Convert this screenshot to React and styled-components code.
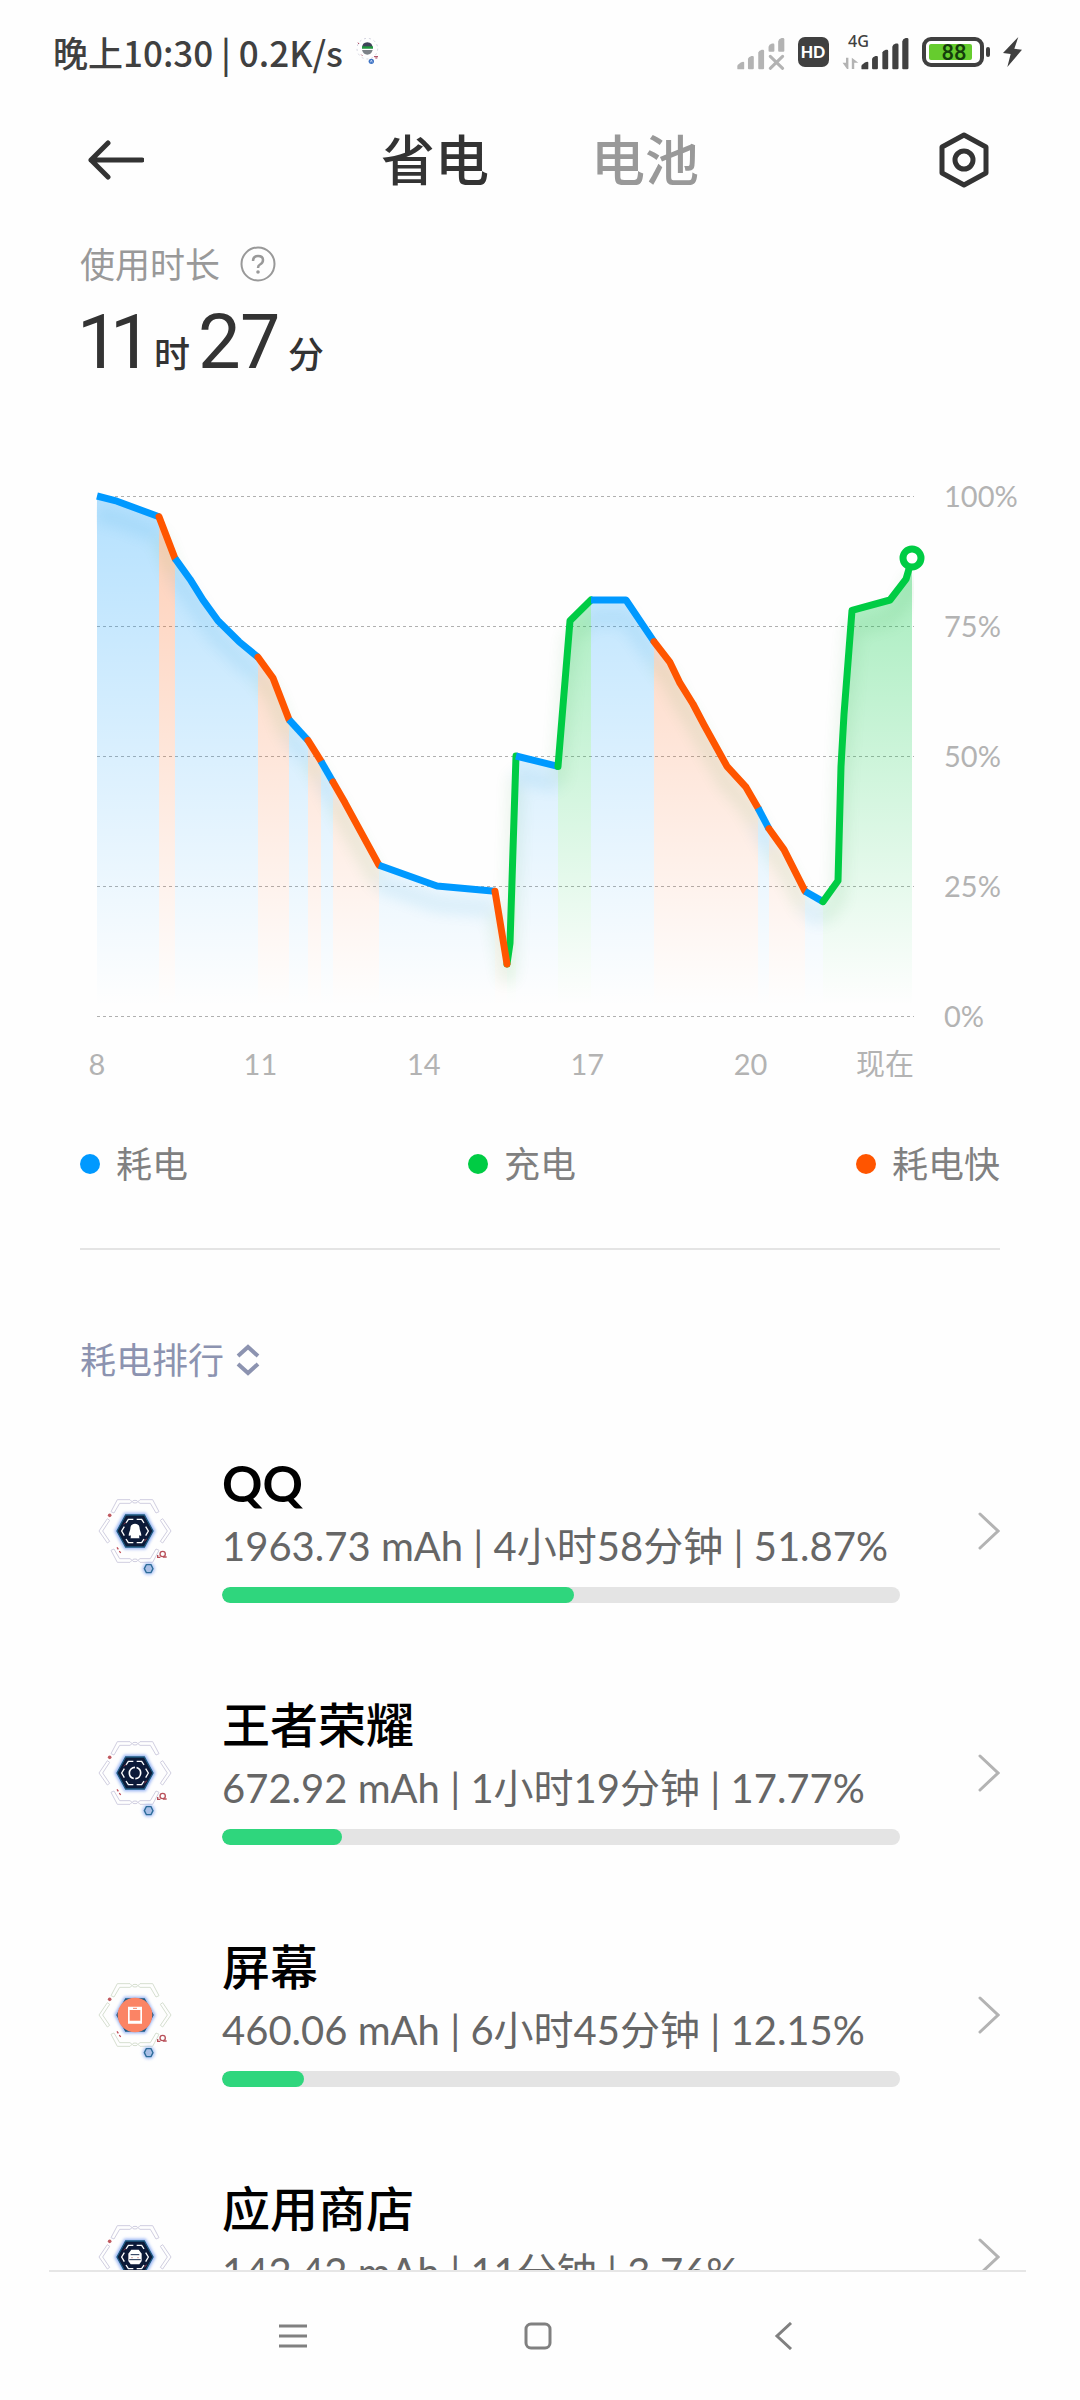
import React, { useState } from 'react';
import styled, { createGlobalStyle } from 'styled-components';

const GlobalStyle = createGlobalStyle`
  * {
    box-sizing: border-box;
  }

  body {
    margin: 0;
    background: #fefefe;
    color: #333;
    font-family: Lato, "Noto Sans CJK SC", sans-serif;
  }

  button {
    border: 0;
    padding: 0;
    background: none;
    color: inherit;
    font: inherit;
    cursor: pointer;
  }

  svg {
    display: block;
    flex-shrink: 0;
  }
`;

const Screen = styled.div`
  height: 100vh;
  display: flex;
  flex-direction: column;
  overflow: hidden;
`;

const StatusBar = styled.div`
  display: flex;
  align-items: center;
  justify-content: space-between;
  height: 104px;
  padding: 0 58px 0 53px;
  color: #404040;
`;

const StatusGroup = styled.div`
  display: flex;
  align-items: center;
  gap: 13px;

  svg {
    overflow: visible;
  }
`;

const StatusText = styled.span`
  font-family: "Noto Sans CJK SC", sans-serif;
  font-size: 35px;
  font-weight: 500;
  line-height: 48px;
`;

const Header = styled.header`
  display: grid;
  grid-template-columns: 1fr auto 1fr;
  align-items: center;
  height: 112px;
  padding: 0 88px;
`;

const IconButton = styled.button`
  justify-self: ${({ $end }) => ($end ? 'end' : 'start')};
`;

const Tabs = styled.nav`
  display: flex;
  gap: 102px;
`;

const Tab = styled.button`
  padding-top: 2px;
  font-size: 54px;
  font-weight: 500;
  line-height: 76px;
  color: ${({ $active }) => ($active ? '#333' : '#999')};
`;

const Content = styled.main`
  flex: 1;
  min-height: 0;
  overflow-y: auto;
  scrollbar-width: none;
  padding: 0 80px;
`;

const Label = styled.div`
  display: flex;
  align-items: center;
  gap: 20px;
  padding-top: 24px;
  font-size: 35px;
  line-height: 48px;
  color: #999;
`;

const Duration = styled.div`
  display: flex;
  align-items: baseline;
  gap: 8px;
  font-family: Roboto, "Noto Sans CJK SC", sans-serif;
  font-size: 36px;
  font-weight: 500;
  line-height: 108px;
`;

const Digits = styled.span`
  font-size: 76px;
  font-weight: 400;
  font-variant-numeric: proportional-nums;
`;

const Chart = styled.section`
  display: grid;
  grid-template-columns: 1fr 86px;
  padding: 86px 0 0 17px;
`;

const Plot = styled.svg`
  width: 100%;
  overflow: visible;
`;

const YAxis = styled.div`
  display: flex;
  flex-direction: column;
  justify-content: space-between;
  margin: -20px -24px -20px 0;
  padding-left: 30px;
  font-size: 29px;
  line-height: 40px;
  white-space: nowrap;
  color: #b3b3b3;
`;

const XAxis = styled.div`
  display: grid;
  grid-template-columns: repeat(5, 2fr) 1fr;
  margin: 28px 0 0 -10%;
  font-size: 29px;
  line-height: 40px;
  text-align: center;
  white-space: nowrap;
  color: #b3b3b3;

  span:last-child {
    justify-self: end;
  }
`;

const Legend = styled.div`
  display: flex;
  justify-content: space-between;
  padding: 54px 0 58px;
  border-bottom: 2px solid #e4e4e4;
`;

const LegendItem = styled.span`
  display: flex;
  align-items: center;
  gap: 16px;
  font-size: 36px;
  line-height: 52px;
  color: #808080;

  &::before {
    content: '';
    width: 20px;
    height: 20px;
    border-radius: 50%;
    background: ${({ $color }) => $color};
  }
`;

const SortButton = styled.button`
  display: flex;
  align-items: center;
  gap: 12px;
  margin: 84px 0 24px;
  font-size: 36px;
  line-height: 52px;
  color: #8c93b0;
`;

const AppList = styled.ul`
  list-style: none;
  margin: 0;
  padding: 0;
`;

const AppRow = styled.li`
  display: grid;
  grid-template-columns: 110px 1fr 68px;
  column-gap: 32px;
  align-items: center;
  height: 242px;
`;

const IconSlot = styled.div`
  display: flex;
  justify-content: center;
`;

const AppName = styled.h2`
  margin: 0;
  font-size: 48px;
  font-weight: 500;
  line-height: 48px;
  color: #000;
`;

const LatinName = styled(AppName)`
  font-size: 50px;
  font-weight: 700;
`;

const Usage = styled.p`
  margin: 14px 0 16px;
  font-size: 40px;
  line-height: 50px;
  white-space: nowrap;
  color: #666;
`;

const Track = styled.div`
  height: 16px;
  border-radius: 8px;
  background: #e4e4e4;
  overflow: hidden;
`;

const Fill = styled.div`
  height: 100%;
  border-radius: 8px;
  background: #2fd67d;
`;

const ChevronSlot = styled.div`
  display: flex;
  justify-content: flex-end;
`;

const NavBar = styled.nav`
  display: flex;
  align-items: center;
  justify-content: center;
  gap: 217px;
  height: 130px;
  margin: 0 54px 0 49px;
  border-top: 2px solid #e6e6e6;
`;

const COLORS = { use: '#0099ff', charge: '#00cc44', fast: '#ff5500' };

// [x, battery %] on an 817 x 520 plot
const SEGMENTS = [
  ['use', [[0, 100], [20, 99], [62, 96]]],
  ['fast', [[62, 96], [78, 88]]],
  ['use', [[78, 88], [93, 84], [106, 80], [121, 76], [142, 72], [161, 69]]],
  ['fast', [[161, 69], [176, 65], [184, 61], [192, 57]]],
  ['use', [[192, 57], [211, 53]]],
  ['fast', [[211, 53], [224, 49]]],
  ['use', [[224, 49], [236, 45]]],
  ['fast', [[236, 45], [248, 41], [282, 29]]],
  ['use', [[282, 29], [340, 25], [398, 24]]],
  ['charge', [[410, 10], [413, 14], [419, 50]]],
  ['fast', [[398, 24], [410, 10]]],
  ['use', [[419, 50], [461, 48]]],
  ['charge', [[461, 48], [473, 76], [494, 80]]],
  ['use', [[494, 80], [529, 80], [557, 72]]],
  ['fast', [[557, 72], [573, 68], [583, 64], [596, 60], [607, 56], [630, 48], [649, 44], [661, 40]]],
  ['use', [[661, 40], [672, 36]]],
  ['fast', [[672, 36], [687, 32], [708, 24]]],
  ['use', [[708, 24], [726, 22]]],
  ['charge', [[726, 22], [741, 26], [744, 48], [747, 58], [755, 78], [793, 80], [809, 84], [815, 88]]],
];

const LINES = [0, 25, 50, 75, 100];

const toY = (percent) => (100 - percent) * 5.2;
const toPoints = (points) => points.map(([x, p]) => `${x},${toY(p)}`).join(' ');

const APPS = [
  { name: 'QQ', icon: 'qq', power: '1963.73 mAh', time: '4小时58分钟', percent: 51.87 },
  { name: '王者荣耀', icon: 'game', power: '672.92 mAh', time: '1小时19分钟', percent: 17.77 },
  { name: '屏幕', icon: 'screen', power: '460.06 mAh', time: '6小时45分钟', percent: 12.15 },
  { name: '应用商店', icon: 'store', power: '142.42 mAh', time: '11分钟', percent: 3.76 },
];

const BatteryChart = () => (
  <Plot viewBox="0 0 817 520" role="img" aria-label="电量曲线">
    <defs>
      {Object.entries(COLORS).map(([kind, color]) => (
        <linearGradient key={kind} id={`area-${kind}`} gradientUnits="userSpaceOnUse" x1="0" y1="0" x2="0" y2="510">
          <stop offset="0" stopColor={color} stopOpacity={kind === 'charge' ? 0.4 : 0.29} />
          <stop offset="1" stopColor={color} stopOpacity="0" />
        </linearGradient>
      ))}
      <filter id="line-shadow" x="-10%" y="-10%" width="120%" height="130%">
        <feGaussianBlur stdDeviation="7" />
      </filter>
      <clipPath id="plot-clip">
        <rect x="-1" y="-6" width="818" height="530" />
      </clipPath>
    </defs>
    {LINES.map((p) => (
      <line key={p} x1="0" x2="817" y1={toY(p)} y2={toY(p)} stroke="#b0b0b0" strokeDasharray="3 3" shapeRendering="crispEdges" />
    ))}
    {SEGMENTS.map(([kind, points]) => (
      <polygon
        key={points[0].join()}
        points={`${points[0][0]},520 ${toPoints(points)} ${points[points.length - 1][0]},520`}
        fill={`url(#area-${kind})`}
      />
    ))}
    <g clipPath="url(#plot-clip)">
      <g filter="url(#line-shadow)" opacity="0.09" transform="translate(0 18)">
        {SEGMENTS.map(([kind, points]) => (
          <polyline
            key={points[0].join()}
            points={toPoints(points)}
            fill="none"
            stroke={kind === 'use' ? '#0088cc' : '#2f9a3c'}
            strokeWidth="16"
          />
        ))}
      </g>
      {SEGMENTS.map(([kind, points]) => (
        <polyline
          key={points[0].join()}
          points={toPoints(points)}
          fill="none"
          stroke={COLORS[kind]}
          strokeWidth="7"
          strokeLinecap={kind === 'use' ? 'butt' : 'round'}
          strokeLinejoin="round"
        />
      ))}
    </g>
    <circle cx="815" cy="62" r="9" fill="#fff" stroke={COLORS.charge} strokeWidth="7" />
  </Plot>
);

const HexFrame = ({ color }) => {
  const corner = 'M-72-58L-53-94H-15L-9-88L-15-83H-46L-63-54Z';
  return (
    <g fill="none" stroke={color} strokeWidth="3">
      <path d={corner} />
      <path d={corner} transform="scale(-1 1)" />
      <path d={corner} transform="scale(1 -1)" />
      <path d={corner} transform="scale(-1 -1)" />
      <path d="M-108 0L-83-37L-76-32L-97 0L-76 31L-83 36Z" />
      <path d="M108 0L83-37L76-32L97 0L76 31L83 36Z" />
      <ellipse cy="-88" rx="8" ry="4" />
      <ellipse cy="88" rx="8" ry="4" />
    </g>
  );
};

const Glyph = ({ name }) => {
  if (name === 'qq') {
    return (
      <path
        d="M0-22C-10-22-14-15-14-7C-14-2-19 5-19 13C-18 17-15 13-14 12C-12 17-12 19-14 22H14C12 19 12 17 14 12C15 13 18 17 19 13C19 5 14-2 14-7C14-15 10-22 0-22Z"
        fill="#fff"
      />
    );
  }
  if (name === 'game') {
    return <circle r="17" fill="none" stroke="#fff" strokeWidth="5" strokeDasharray="48 5" strokeDashoffset="-30" />;
  }
  return (
    <g>
      <path d="M-11-22H11L20-10V12L13 22H-13L-20 12V-10Z" fill="#fff" />
      <path d="M-13-7H13M-17 8H17" stroke="#1a2c50" strokeWidth="3" />
      <path d="M-12 2H-6M6 2H12" stroke="#c88" strokeWidth="2" />
    </g>
  );
};

const AppIcon = ({ name }) => (
  <svg width="76" height="100" viewBox="-114 -150 228 300" aria-hidden="true">
    <defs>
      <filter id="glow" x="-40%" y="-40%" width="180%" height="180%">
        <feGaussianBlur stdDeviation="5" />
      </filter>
    </defs>
    <HexFrame color={name === 'screen' ? '#d6dfd0' : '#d0cee0'} />
    <path d="M-62 0L-32-55H32L62 0L32 55H-32Z" fill="#7da0f0" opacity="0.8" filter="url(#glow)" />
    <path d="M-54 0L-28-48H28L54 0L28 48H-28Z" fill={name === 'screen' ? '#2a6a94' : '#0c1a38'} stroke="#1c587f" strokeWidth="4" />
    {name === 'screen' ? (
      <g>
        <circle r="52" fill="#fb8465" />
        <path d="M-21-25H21V26H-21ZM-16-15V17H16V-15Z" fill="#fff" fillRule="evenodd" />
        <path d="M-6-20H6" stroke="#fb8465" strokeWidth="3" />
      </g>
    ) : (
      <g>
        <path
          d="M-32-13L-40 0L-32 14M32-13L40 0L32 14M-27-24L-20-35H-5M5-35H20L27-24M-27 24L-20 35H-5M5 35H20L27 24"
          fill="none"
          stroke="#fff"
          strokeWidth="4"
        />
        <path d="M-33-20L-28-25M28 30L35 24" stroke="#a33a4a" strokeWidth="3" />
        <Glyph name={name} />
      </g>
    )}
    <circle cx="-76" cy="-47" r="5.5" fill="#c05a60" />
    <path d="M-54 49L-50 55M-47 60L-43 66" stroke="#c04a55" strokeWidth="4" />
    <g fill="none" stroke="#b8505a" strokeWidth="4">
      <circle cx="83" cy="69" r="8" />
      <path d="M66 79H76M84 78H95M68 72V78" />
    </g>
    <circle cx="41" cy="113" r="19" fill="#9db8f4" opacity="0.8" filter="url(#glow)" />
    <path d="M28 113L34 101H48L54 113L48 125H34Z" fill="#a9bfe6" stroke="#2c6c99" strokeWidth="4" />
  </svg>
);

const SignalBars = () => (
  <>
    <path d="M0 98V92Q0 86 10 80Q19 76 20 80V98Q20 100 17 100H3Q0 100 0 98Z" />
    <path d="M31 97V69Q32 64 41 61H45Q48 61 48 65V97Q48 100 45 100H34Q31 100 31 97Z" />
    <path d="M61 97V51Q62 46 71 43H75Q78 43 78 47V97Q78 100 75 100H64Q61 100 61 97Z" />
  </>
);

const StatusIcons = () => (
  <StatusGroup>
    <svg width="48" height="35" viewBox="0 0 138 102" fill="#b3b3b3">
      <SignalBars />
      <path d="M91 46V34Q92 28 101 25H105Q108 25 108 29V46Q108 49 105 49H94Q91 49 91 46Z" />
      <path d="M119 46V19Q120 12 129 9H133Q137 9 137 13V46Q137 49 134 49H122Q119 49 119 46Z" />
      <path d="M96 62L132 97M132 62L96 97" stroke="#b3b3b3" strokeWidth="9" strokeLinecap="round" />
    </svg>
    <svg width="31" height="30" viewBox="0 0 31 30">
      <rect width="31" height="30" rx="7" fill="#404040" />
      <text x="15" y="21" textAnchor="middle" fontFamily="Lato, sans-serif" fontSize="16" fontWeight="900" fill="#fff">HD</text>
    </svg>
    <svg width="67" height="35" viewBox="0 0 192 102" fill="#404040">
      <text x="16" y="34" fontFamily="Noto Sans, sans-serif" fontSize="47" fontWeight="500">4G</text>
      <g fill="#b3b3b3">
        <path d="M10 66H17V99H13L0 81H10ZM27 99V66L46 81H34V99Z" />
      </g>
      <g transform="translate(55 0)">
        <SignalBars />
        <path d="M90 97V34Q91 28 100 25H104Q108 25 108 29V97Q108 100 104 100H93Q90 100 90 97Z" />
        <path d="M119 97V19Q120 12 129 9H133Q137 9 137 13V97Q137 100 133 100H122Q119 100 119 97Z" />
      </g>
    </svg>
    <svg width="68" height="30" viewBox="0 0 68 30">
      <rect x="2" y="2" width="58" height="26" rx="7" fill="#fff" stroke="#404040" strokeWidth="4" />
      <rect x="7" y="7" width="43" height="16" rx="2" fill="#66cc2e" />
      <text x="32" y="23" textAnchor="middle" fontFamily="Roboto, sans-serif" fontSize="22" fontWeight="500" fill="#143d0c">88</text>
      <rect x="64" y="10" width="4" height="10" rx="2" fill="#404040" />
    </svg>
    <svg width="19" height="30" viewBox="0 0 57 90" fill="#404040">
      <path d="M46 0L0 48L23 51L13 90L57 38L34 35Z" />
    </svg>
  </StatusGroup>
);

const StatusBadge = () => (
  <svg width="24" height="28" viewBox="0 0 72 84">
    <circle cx="34" cy="32" r="31" fill="none" stroke="#d5d5e0" strokeWidth="3" strokeDasharray="6 9" />
    <path d="M18 31Q18 13 34 13Q50 13 50 31Z" fill="#3d4258" />
    <rect x="18" y="25" width="33" height="7" fill="#1f9a3d" />
    <path d="M18 36H50Q46 50 34 50Q22 50 18 36Z" fill="#7d8288" />
    <path d="M6 14L9 18M16 50L19 53M54 56H66M58 60H64" stroke="#a33a55" strokeWidth="3" />
    <circle cx="46" cy="70" r="8" fill="#3f74c4" />
    <path d="M43 73L46 66L49 73" fill="none" stroke="#dfe8ff" strokeWidth="2" />
  </svg>
);

const App = () => {
  const [tab, setTab] = useState('省电');

  return (
    <Screen>
      <GlobalStyle />
      <StatusBar>
        <StatusGroup>
          <StatusText>晚上10:30 | 0.2K/s</StatusText>
          <StatusBadge />
        </StatusGroup>
        <StatusIcons />
      </StatusBar>

      <Header>
        <IconButton aria-label="返回">
          <svg width="56" height="40" viewBox="0 0 56 40" fill="none" stroke="#333" strokeWidth="5" strokeLinecap="round" strokeLinejoin="round">
            <path d="M54 20H3M20 3L3 20L20 37" />
          </svg>
        </IconButton>
        <Tabs>
          {['省电', '电池'].map((name) => (
            <Tab key={name} $active={tab === name} onClick={() => setTab(name)}>{name}</Tab>
          ))}
        </Tabs>
        <IconButton $end aria-label="设置">
          <svg width="56" height="56" viewBox="0 0 56 56" fill="none" stroke="#333" strokeWidth="5" strokeLinejoin="round">
            <path d="M28 3L50 15V41L28 53L6 41V15Z" />
            <circle cx="28" cy="28" r="9" />
          </svg>
        </IconButton>
      </Header>

      <Content>
        <Label>
          使用时长
          <svg width="36" height="36" viewBox="0 0 36 36" fill="none" stroke="#999" strokeWidth="2">
            <circle cx="18" cy="18" r="16.5" />
            <path d="M13 15Q13 10 18 10Q23 10 23 14Q23 17 20 18.5Q18 19.5 18 22" strokeWidth="2.5" />
            <circle cx="18" cy="26" r="1.8" fill="#999" stroke="none" />
          </svg>
        </Label>
        <Duration>
          <Digits>11</Digits>时<Digits>27</Digits>分
        </Duration>

        <Chart>
          <BatteryChart />
          <YAxis>
            {[100, 75, 50, 25, 0].map((p) => <span key={p}>{p}%</span>)}
          </YAxis>
          <XAxis>
            {['8', '11', '14', '17', '20', '现在'].map((t) => <span key={t}>{t}</span>)}
          </XAxis>
        </Chart>

        <Legend>
          <LegendItem $color={COLORS.use}>耗电</LegendItem>
          <LegendItem $color={COLORS.charge}>充电</LegendItem>
          <LegendItem $color={COLORS.fast}>耗电快</LegendItem>
        </Legend>

        <SortButton>
          耗电排行
          <svg width="24" height="32" viewBox="0 0 24 32" fill="none" stroke="#8c93b0" strokeWidth="4">
            <path d="M2 12L12 3L22 12M2 20L12 29L22 20" />
          </svg>
        </SortButton>

        <AppList>
          {APPS.map(({ name, icon, power, time, percent }) => {
            const Name = /^\w+$/.test(name) ? LatinName : AppName;
            return (
              <AppRow key={name}>
                <IconSlot><AppIcon name={icon} /></IconSlot>
                <div>
                  <Name>{name}</Name>
                  <Usage>{power} | {time} | {percent}%</Usage>
                  <Track>
                    <Fill style={{ width: `${percent}%` }} />
                  </Track>
                </div>
                <ChevronSlot>
                  <svg width="22" height="38" viewBox="0 0 22 38" fill="none" stroke="#b3b3b3" strokeWidth="3" strokeLinecap="round">
                    <path d="M2 2L20 19L2 36" />
                  </svg>
                </ChevronSlot>
              </AppRow>
            );
          })}
        </AppList>
      </Content>

      <NavBar>
        <IconButton aria-label="最近任务">
          <svg width="28" height="28" viewBox="0 0 28 28" stroke="#808080" strokeWidth="3">
            <path d="M0 4H28M0 14H28M0 24H28" />
          </svg>
        </IconButton>
        <IconButton aria-label="主屏幕">
          <svg width="28" height="28" viewBox="0 0 28 28" fill="none" stroke="#808080" strokeWidth="3">
            <rect x="2" y="2" width="24" height="24" rx="5" />
          </svg>
        </IconButton>
        <IconButton aria-label="后退">
          <svg width="28" height="28" viewBox="0 0 28 28" fill="none" stroke="#808080" strokeWidth="3">
            <path d="M22 1L8 14L22 27" />
          </svg>
        </IconButton>
      </NavBar>
    </Screen>
  );
};

export default App;
